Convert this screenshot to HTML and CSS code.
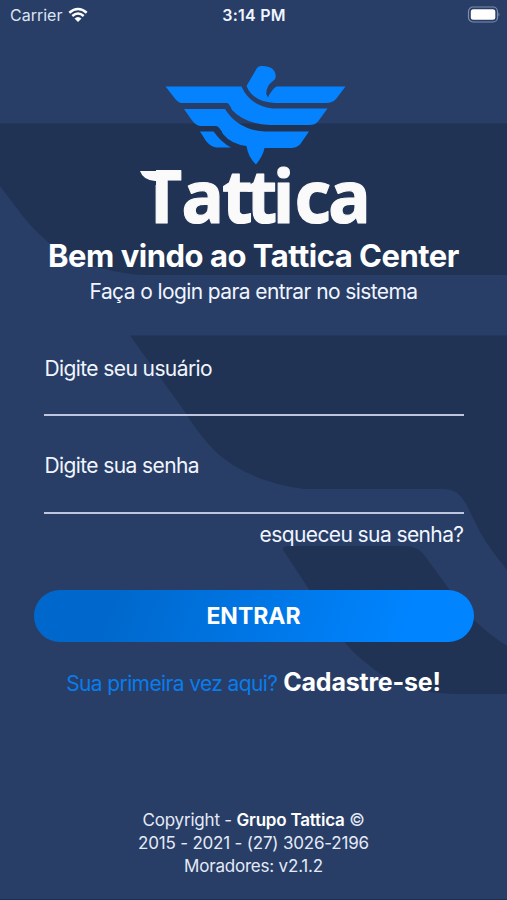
FILE: index.html
```html
<!DOCTYPE html>
<html lang="pt-BR">
<head>
<meta charset="utf-8">
<meta name="viewport" content="width=device-width, initial-scale=1">
<title>Tattica Center</title>
<link rel="stylesheet" href="styles.css">
</head>
<body>
<div class="screen">
  <svg class="backdrop" viewBox="0 0 507 900" aria-hidden="true">
    <path d="M0 123.500H507V275H140Q85 270 48 242Q30 227 16 207L0 186Z"/>
    <path d="M130 335.500H507V570Q490 549 480 532L466 504Q458 489 444 489H304Q250 482 217 453Q199 435 185 412Z"/>
    <path d="M283 550Q282 546 288 546H406Q418 546 425 556L454 596Q474 625 507 646V694H456Q401 693 370 666Q351 652 340 636Z"/>
  </svg>
  <header class="status">
    <div class="carrier"><span>Carrier</span>
      <svg class="wifi" viewBox="0 0 20 16"><path d="M1.300 5.700Q10-1.800 18.700 5.700M4.300 9Q10 4.100 15.700 9" fill="none" stroke="#fff" stroke-width="2.500"/><path d="M6.500 11.500Q10 8.500 13.500 11.500L10 15Z" fill="#fff"/></svg>
    </div>
    <div class="clock">3:14 PM</div>
    <svg class="battery" viewBox="0 0 34 18"><rect x="1.500" y="1" width="29" height="15" rx="4.500" fill="none" stroke="#7f8cab" stroke-width="1.200"/><rect x="3.800" y="3.200" width="24.500" height="10.600" rx="2.500" fill="#fff"/><path d="M31.500 6.500Q33.500 8.500 31.500 10.500Z" fill="#7f8cab"/></svg>
  </header>
  <main class="content">
    <svg class="logo" viewBox="130 60 250 174" role="img" aria-label="Tattica">
      <g fill="#0583ff">
        <path d="M246.500 86L257 68Q258.500 66 261 66Q275 65.500 275.700 76Q276 79 273 81Q266 86 266.300 94L268 97.500Q269 94.500 271.500 91.500Q274.500 87 277 86.500H345.500L336 99Q332.500 103 326 103H275Q253 102 246.500 86Z"/>
        <path d="M165.500 86.500H241.500Q250 106 273 108.500H327.500L318 121.500Q315 125 309 125H270Q245 124 232 110Q229 103 227 103H181Q177 102 173 96Z"/>
        <path d="M184 109H225Q238 130 265 131.500H309L300 144.500Q296 148 291 148H264.500Q263 156 256 164.500Q248 157 246.500 146Q231 144 223 134Q219 126 216 126H200Q195 125 191 119Z"/>
        <path d="M200 131.500H213.500Q222 143 231 147.500H217Q211 147 206 141Z"/>
      </g>
      <text class="wordmark" y="223.500" transform="scale(.97 1)" x="145.500 187 229 254 281.500 303.500 338.500">Tattica</text>
      <path d="M138 168H156V185H138Z" fill="#203354"/>
      <path d="M140 171H158V181H155Q143 180 140 171Z" fill="#fafafa"/>
    </svg>
    <h1 class="title">Bem vindo ao Tattica Center</h1>
    <p class="subtitle">Faça o login para entrar no sistema</p>
    <form class="form">
      <div class="field user">Digite seu usuário</div>
      <div class="field password">Digite sua senha</div>
      <a class="forgot">esqueceu sua senha?</a>
      <button class="enter" type="button">ENTRAR</button>
    </form>
    <p class="signup"><span class="first">Sua primeira vez aqui?</span> <strong class="register">Cadastre-se!</strong></p>
  </main>
  <footer class="footer">
    <div class="copy">Copyright - <b>Grupo Tattica</b> ©</div>
    <div class="phone">2015 - 2021 - (27) 3026-2196</div>
    <div class="version">Moradores: v2.1.2</div>
  </footer>
</div>
</body>
</html>
```
FILE: styles.css
```css
* { box-sizing: border-box; }
body { margin: 0; background: #283e66; }
.screen {
  position: relative;
  display: flex;
  flex-direction: column;
  width: 507px;
  height: 900px;
  overflow: hidden;
  color: #f1f5ff;
  font-family: Inter, "Liberation Sans", sans-serif;
  border-bottom: 1px solid #1c2f50;
  white-space: nowrap;
}
.backdrop { position: absolute; inset: 0; width: 507px; height: 900px; fill: #203354; }
.status, .content, .footer { position: relative; }
.status {
  display: grid;
  grid-template-columns: 1fr auto 1fr;
  align-items: center;
  height: 30px;
  padding: 0 6px 0 10px;
  font-size: 16px;
}
.carrier { display: flex; align-items: center; gap: 6px; letter-spacing: 0; color: #dde4f3; }
.wifi { width: 20px; height: 16px; }
.clock { font-weight: 600; letter-spacing: .25px; margin-right: 3px; }
.battery { justify-self: end; width: 34px; height: 18px; }
.content { display: flex; flex-direction: column; align-items: center; padding-top: 30px; }
.logo { width: 250px; height: 174px; margin-right: -3px; overflow: visible; }
.wordmark { font: bold 73px "Noto Sans", "Open Sans", sans-serif; fill: #fafafa; stroke: #fafafa; stroke-width: 1.2px; stroke-linejoin: round; }
.title { margin: 2px 0 0; height: 39px; line-height: 39px; font-size: 31px; font-weight: 700; letter-spacing: -.5px; color: #fff; }
.subtitle { margin: 3px 0 0; height: 28px; line-height: 28px; font-size: 21px; letter-spacing: -.6px; }
.form { display: flex; flex-direction: column; width: 440px; margin-top: 48px; }
.field {
  height: 62px;
  margin: 0 10px;
  padding-left: 1px;
  line-height: 30px;
  font-size: 21px;
  letter-spacing: -.6px;
  border-bottom: 2px solid #bdc5df;
}
.password { margin-top: 35px; height: 63px; }
.forgot { align-self: flex-end; margin: 7px 10px 0 0; height: 28px; line-height: 28px; font-size: 21px; letter-spacing: -.6px; }
.enter {
  height: 52px;
  margin-top: 41px;
  border: 0;
  border-radius: 26px;
  background: linear-gradient(110deg, #0068cc 18%, #0084ff 84%);
  color: #fff;
  font: 700 23px/52px Inter, sans-serif;
  padding: 0;
}
.signup { margin: 21px 0 0; height: 38px; line-height: 38px; font-size: 21px; }
.first { color: #087cec; letter-spacing: -.62px; }
.register { color: #fff; font-size: 25px; font-weight: 700; letter-spacing: -.2px; }
.footer { margin-top: auto; padding-bottom: 21px; text-align: center; font-size: 17px; line-height: 23px; letter-spacing: -.2px; color: #e4eaf8; }
.footer b { font-weight: 600; color: #fff; }
```
